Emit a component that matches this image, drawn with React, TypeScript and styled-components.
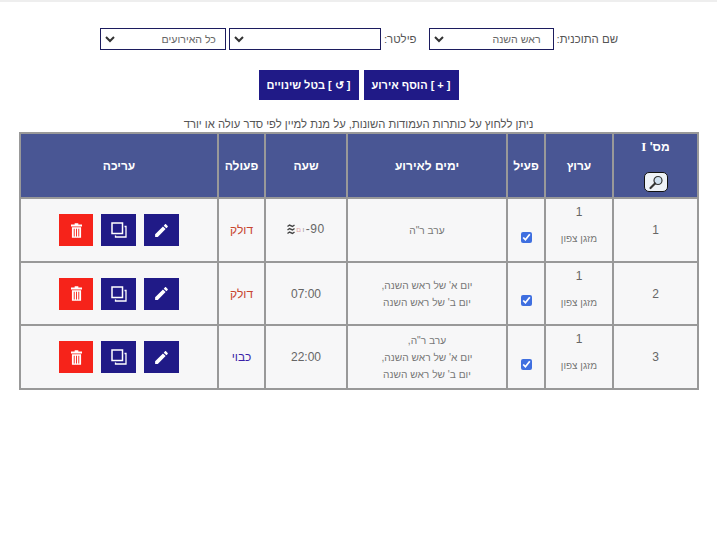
import React from 'react';
import styled, {createGlobalStyle} from "styled-components";

const GlobalStyle = createGlobalStyle`
  html, body {
    margin: 0;
    padding: 0;
    background-color: white;
  }
  body {
    font-family: "Liberation Sans", Arial, sans-serif;
    color: #555;
  }
`

const Page = styled.div`
  width: 717px;
  height: 558px;
  box-sizing: border-box;
  border-top: 2px solid #eee;
  direction: rtl;
  overflow: hidden;
`

const FilterBar = styled.div`
  display: flex;
  justify-content: flex-start;
  align-items: center;
  height: 22px;
  margin-top: 26px;
  padding-right: 99px;
  font-size: 11.4px;
`

const FilterLabel = styled.label<{$gapLeft: number}>`
  margin-left: ${(props) => props.$gapLeft}px;
  color: #555;
`

const Select = styled.div<{$width: number; $gapLeft?: number}>`
  width: ${(props) => props.$width}px;
  height: 22px;
  box-sizing: border-box;
  border: 1px solid #1c1c5e;
  background: white;
  display: flex;
  align-items: center;
  justify-content: space-between;
  padding: 0 0 0 4px;
  margin-left: ${(props) => props.$gapLeft ?? 0}px;
  font-size: 10.6px;
  color: #666;
`

const SelectValue = styled.span<{$inset: number}>`
  padding-right: ${(props) => props.$inset}px;
`

const ButtonRow = styled.div`
  display: flex;
  justify-content: center;
  gap: 5px;
  margin-top: 20px;
`

const ActionButton = styled.button<{$width: number}>`
  width: ${(props) => props.$width}px;
  height: 30px;
  padding: 0;
  border: none;
  background: #201a87;
  color: white;
  font-family: inherit;
  font-size: 11px;
  font-weight: bold;
  direction: rtl;
`

const Hint = styled.div`
  margin-top: 17px;
  height: 15px;
  line-height: 15px;
  text-align: center;
  font-size: 11.25px;
  color: #555;
`

const Table = styled.table`
  width: 680px;
  margin: 0 18px 0 19px;
  border-collapse: collapse;
  table-layout: fixed;
  background: #f7f7f8;
`

const HeadCell = styled.th<{$width?: number}>`
  width: ${(props) => props.$width ? `${props.$width}px` : "auto"};
  height: 63px;
  padding: 0;
  border: 2px solid #999;
  background: #495694;
  color: white;
  font-size: 12px;
  font-weight: bold;
  text-align: center;
`

const SerifLetter = styled.span`
  font-family: "Liberation Serif", serif;
  font-size: 13px;
`

const SearchButton = styled.div`
  width: 24px;
  height: 20px;
  box-sizing: border-box;
  margin: 17px auto 0;
  border: 1px solid #111;
  border-radius: 5px;
  background: #eef2f7;
  display: flex;
  align-items: center;
  justify-content: center;
`

const Cell = styled.td`
  padding: 0;
  border: 2px solid #999;
  text-align: center;
  font-size: 12px;
  color: #666;
`

const Row = styled.tr<{$height: number}>`
  height: ${(props) => props.$height}px;
`

const ZoneBox = styled.div`
  display: flex;
  flex-direction: column;
  align-items: center;
  gap: 14px;
  padding-bottom: 11px;
`

const ZoneName = styled.span`
  font-size: 10px;
  color: #777;
`

const CheckMark = styled.input`
  width: 11px;
  height: 11px;
  margin: 17px 0 0;
  accent-color: #3f6fe0;
`

const Days = styled.div`
  font-size: 10.2px;
  line-height: 17px;
  color: #777;
`

const TimeText = styled.span`
  direction: ltr;
  display: inline-flex;
  align-items: center;
  gap: 1px;
  letter-spacing: 0.5px;
`

const Small = styled.span<{$pink?: boolean}>`
  font-size: 7px;
  color: ${(props) => props.$pink ? "#e0a0a0" : "#999"};
`

const ActionText = styled.span<{$on: boolean}>`
  font-size: 12px;
  color: ${(props) => props.$on ? "#c8452f" : "#3a1fa8"};
`

const EditIcons = styled.div`
  display: flex;
  justify-content: center;
  gap: 8px;
`

const IconButton = styled.div<{$danger?: boolean}>`
  width: ${(props) => props.$danger ? 34 : 35}px;
  height: 32px;
  background: ${(props) => props.$danger ? "#f6231a" : "#201a87"};
  display: flex;
  align-items: center;
  justify-content: center;
`

function Chevron() {
  return (
    <svg width="10" height="8" viewBox="0 0 10 8">
      <path d="M1 2 L5 6 L9 2" fill="none" stroke="#333" strokeWidth="2"/>
    </svg>
  )
}

function Magnifier() {
  return (
    <svg width="16" height="15" viewBox="0 0 16 15">
      <circle cx="10" cy="5.5" r="4" fill="#cfe0f0" stroke="#333" strokeWidth="1.2"/>
      <path d="M7 8.5 L2.5 13" stroke="#333" strokeWidth="2.2" strokeLinecap="round"/>
    </svg>
  )
}

function PencilIcon() {
  return (
    <svg width="17" height="17" viewBox="0 0 24 24" fill="white">
      <path d="M3 17.25V21h3.75L17.81 9.94l-3.75-3.75L3 17.25zM20.71 7.04c.39-.39.39-1.02 0-1.41l-2.34-2.34c-.39-.39-1.02-.39-1.41 0l-1.83 1.83 3.75 3.75 1.83-1.83z"/>
    </svg>
  )
}

function CopyIcon() {
  return (
    <svg width="16" height="16" viewBox="0 0 16 16" fill="none" stroke="white">
      <rect x="1" y="1" width="10.5" height="10.5" strokeWidth="1.5"/>
      <path d="M13.5 4.5 H15 V15 H4.5 V13.5" strokeWidth="1.3"/>
    </svg>
  )
}

function TrashIcon() {
  return (
    <svg width="11" height="15" viewBox="0 0 12 16" fill="white">
      <path d="M4 0 H8 V1.5 H12 V3.5 H0 V1.5 H4 Z"/>
      <path d="M1 4.5 H11 V16 H1 Z M3 6 V14.5 H4 V6 Z M5.5 6 V14.5 H6.5 V6 Z M8 6 V14.5 H9 V6 Z" fillRule="evenodd"/>
    </svg>
  )
}

function WavesIcon() {
  return (
    <svg width="8" height="11" viewBox="0 0 8 11" fill="none" stroke="#444" strokeWidth="1.4">
      <path d="M0.5 2.5 L2.5 1 L5.5 2.5 L7.5 1"/>
      <path d="M0.5 6 L2.5 4.5 L5.5 6 L7.5 4.5"/>
      <path d="M0.5 9.5 L2.5 8 L5.5 9.5 L7.5 8"/>
    </svg>
  )
}

interface IEvent {
  id: number
  zone: string
  zoneName: string
  days: string[]
  on: boolean
  time: string
  height: number
}

const events: IEvent[] = [
  {id: 1, zone: "1", zoneName: "מזגן צפון", days: ["ערב ר\"ה"], on: true, time: "", height: 64},
  {id: 2, zone: "1", zoneName: "מזגן צפון", days: ["יום א' של ראש השנה,", "יום ב' של ראש השנה"], on: true, time: "07:00", height: 63},
  {id: 3, zone: "1", zoneName: "מזגן צפון", days: ["ערב ר\"ה,", "יום א' של ראש השנה,", "יום ב' של ראש השנה"], on: false, time: "22:00", height: 64},
]

function App() {
  return (
    <Page>
      <GlobalStyle/>
      <FilterBar>
        <FilterLabel $gapLeft={3}>שם התוכנית:</FilterLabel>
        <Select $width={125} $gapLeft={12}>
          <SelectValue $inset={12}>ראש השנה</SelectValue>
          <Chevron/>
        </Select>
        <FilterLabel $gapLeft={3}>פילטר:</FilterLabel>
        <Select $width={152} $gapLeft={3}>
          <SelectValue $inset={8}/>
          <Chevron/>
        </Select>
        <Select $width={126}>
          <SelectValue $inset={9}>כל האירועים</SelectValue>
          <Chevron/>
        </Select>
      </FilterBar>
      <ButtonRow>
        <ActionButton $width={95}>[ + ] הוסף אירוע</ActionButton>
        <ActionButton $width={100}>[ ↺ ] בטל שינויים</ActionButton>
      </ButtonRow>
      <Hint>ניתן ללחוץ על כותרות העמודות השונות, על מנת למיין לפי סדר עולה או יורד</Hint>
      <Table>
        <thead>
          <tr>
            <HeadCell $width={83}>
              מס' <SerifLetter>I</SerifLetter>
              <SearchButton><Magnifier/></SearchButton>
            </HeadCell>
            <HeadCell $width={66}>ערוץ</HeadCell>
            <HeadCell $width={36}>פעיל</HeadCell>
            <HeadCell $width={158}>ימים לאירוע</HeadCell>
            <HeadCell $width={80}>שעה</HeadCell>
            <HeadCell $width={45}>פעולה</HeadCell>
            <HeadCell>עריכה</HeadCell>
          </tr>
        </thead>
        <tbody>
          {events.map(event => (
            <Row key={event.id} $height={event.height}>
              <Cell>{event.id}</Cell>
              <Cell>
                <ZoneBox>
                  {event.zone}
                  <ZoneName>{event.zoneName}</ZoneName>
                </ZoneBox>
              </Cell>
              <Cell><CheckMark type="checkbox" defaultChecked/></Cell>
              <Cell>
                <Days>
                  {event.days.map(day => <div key={day}>{day}</div>)}
                </Days>
              </Cell>
              <Cell>
                {event.time || (
                  <TimeText>
                    <WavesIcon/>
                    <Small $pink>ם</Small>
                    <Small>ו</Small>
                    -90
                  </TimeText>
                )}
              </Cell>
              <Cell><ActionText $on={event.on}>{event.on ? "דולק" : "כבוי"}</ActionText></Cell>
              <Cell>
                <EditIcons>
                  <IconButton><PencilIcon/></IconButton>
                  <IconButton><CopyIcon/></IconButton>
                  <IconButton $danger><TrashIcon/></IconButton>
                </EditIcons>
              </Cell>
            </Row>
          ))}
        </tbody>
      </Table>
    </Page>
  );
}

export default App;
